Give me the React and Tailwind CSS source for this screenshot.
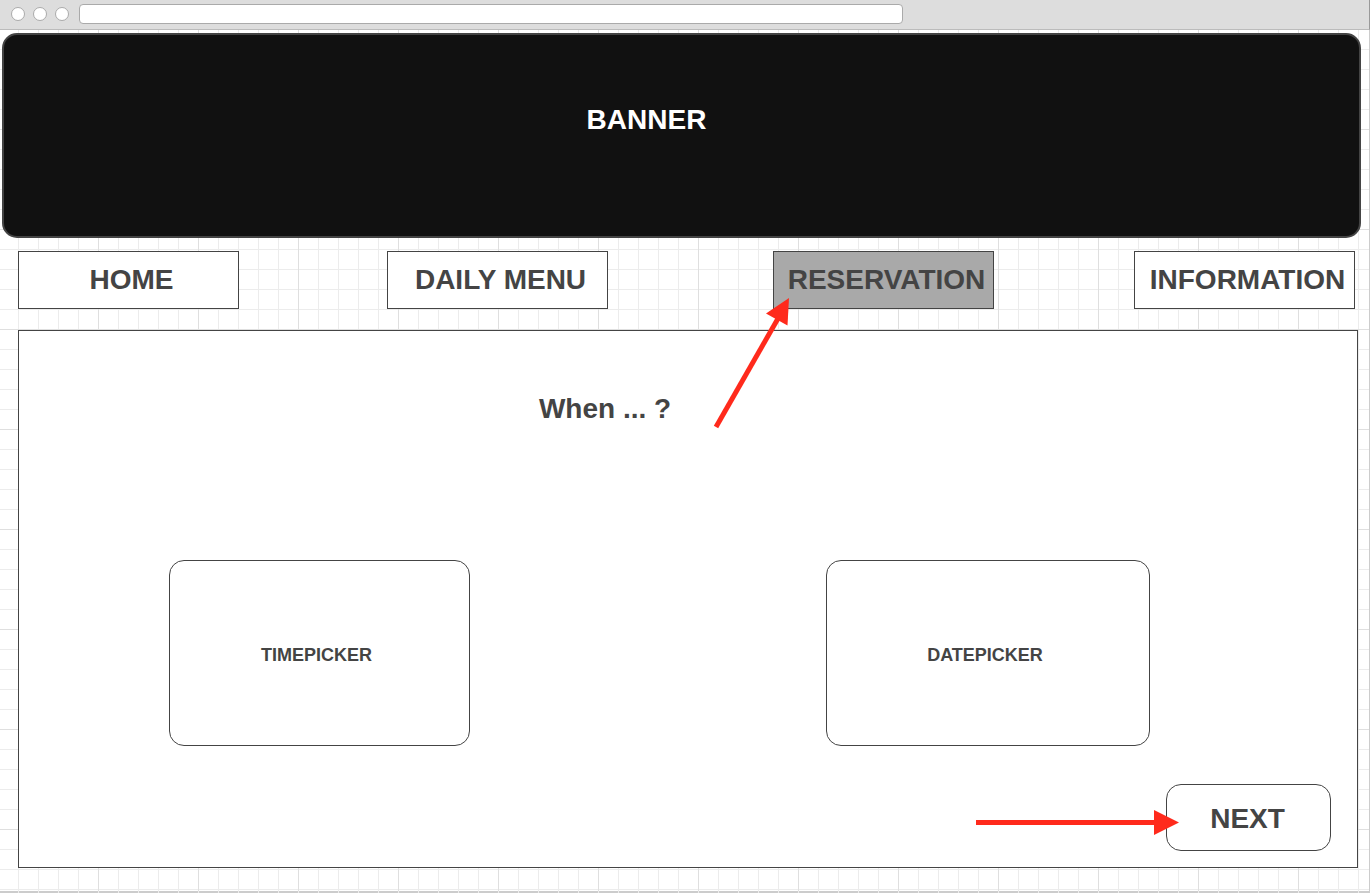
const navItems = [
  { label: 'HOME', column: 'col-start-1' },
  { label: 'DAILY MENU', column: 'col-start-3' },
  { label: 'RESERVATION', column: 'col-start-5', active: true },
  { label: 'INFORMATION', column: 'col-start-7' },
];

function BrowserBar() {
  return (
    <header className="flex h-[30px] items-center border-b border-[#bbbbbb] border-r border-r-[#999999] bg-[#dddddd] pb-0.5 pl-[11px]">
      <div className="flex gap-2" aria-hidden="true">
        <span className="size-3.5 rounded-full border border-[#aaaaaa] bg-white" />
        <span className="size-3.5 rounded-full border border-[#aaaaaa] bg-white" />
        <span className="size-3.5 rounded-full border border-[#aaaaaa] bg-white" />
      </div>
      <input
        type="text"
        aria-label="Address"
        className="ml-2.5 h-5 w-[824px] rounded border border-[#aaaaaa] bg-white px-2 text-xs outline-none"
      />
    </header>
  );
}

function DiagonalArrow() {
  return (
    <svg
      className="pointer-events-none absolute -left-[61px] top-[45px] z-10"
      width="80"
      height="134"
      viewBox="0 0 80 134"
      aria-hidden="true"
    >
      <path d="M4 131 L68 19" stroke="#ff2a1c" strokeWidth="5" />
      <path d="M77 2 L54 17.5 L75.5 29.5 Z" fill="#ff2a1c" />
    </svg>
  );
}

function RightArrow() {
  return (
    <svg
      className="pointer-events-none absolute -left-[190px] top-[26px]"
      width="204"
      height="26"
      viewBox="0 0 204 26"
      aria-hidden="true"
    >
      <path d="M0 12.5 H180" stroke="#ff2a1c" strokeWidth="5" />
      <path d="M178 0 L203 12.5 L178 25 Z" fill="#ff2a1c" />
    </svg>
  );
}

function NavItem({ label, column, active }) {
  return (
    <div className={`relative ${column}`}>
      <a
        href="#"
        aria-current={active ? 'page' : undefined}
        className={`flex h-[58px] items-center justify-center border border-[#444444] pl-1.5 text-[28px] leading-8 whitespace-nowrap ${
          active ? 'bg-[#a9a9a9]' : 'bg-white'
        }`}
      >
        {label}
      </a>
      {active && <DiagonalArrow />}
    </div>
  );
}

function Picker({ label, column }) {
  return (
    <button
      type="button"
      className={`h-[186px] rounded-[15px] border border-[#444444] bg-white pt-1 pr-1.5 text-lg font-bold ${column}`}
    >
      {label}
    </button>
  );
}

export default function App() {
  return (
    <div className="flex min-h-screen flex-col bg-white font-['Liberation_Sans',Arial,sans-serif] font-bold text-[#444444]">
      <BrowserBar />
      <div className="flex grow flex-col border-r border-[#cccccc] bg-[linear-gradient(to_right,#dfdfdf_1px,transparent_1px),linear-gradient(to_bottom,#dfdfdf_1px,transparent_1px),linear-gradient(to_right,#ececec_1px,transparent_1px),linear-gradient(to_bottom,#ececec_1px,transparent_1px)] bg-[size:100px_100px,100px_100px,20px_20px,20px_20px] bg-[position:98px_0,0_99px,18px_0,0_19px] pt-[3px]">
        <section className="mr-2 ml-0.5 h-[205px] rounded-[15px] border-2 border-[#444444] bg-[#111111] pt-[69px] pr-[70px] text-center">
          <h1 className="text-[28px] leading-8 text-white">BANNER</h1>
        </section>

        <nav className="mt-[13px] mr-3.5 ml-[18px] grid grid-cols-[221px_148fr_221px_165fr_221px_140fr_221px]">
          {navItems.map((item) => (
            <NavItem key={item.label} {...item} />
          ))}
        </nav>

        <main className="mt-[21px] mr-[11px] mb-[23px] ml-[18px] border border-[#444444] bg-white pt-[62px] pb-4">
          <h2 className="pr-[166px] text-center text-[28px] leading-8">When ... ?</h2>
          <div className="mt-[135px] grid grid-cols-[150fr_301fr_356fr_324fr_207fr]">
            <Picker label="TIMEPICKER" column="col-start-2" />
            <Picker label="DATEPICKER" column="col-start-4" />
          </div>
          <div className="mt-[38px] flex justify-end pr-[26px]">
            <div className="relative">
              <button
                type="button"
                className="h-[67px] w-[165px] rounded-[15px] border border-[#444444] bg-white pt-0.5 pr-0.5 text-[28px] leading-8 font-bold"
              >
                NEXT
              </button>
              <RightArrow />
            </div>
          </div>
        </main>
      </div>
      <div className="h-0.5 bg-[#cccccc] bg-[linear-gradient(to_right,#ececec_1px,transparent_1px)] bg-[size:20px_2px] bg-[position:18px_0]" />
    </div>
  );
}
